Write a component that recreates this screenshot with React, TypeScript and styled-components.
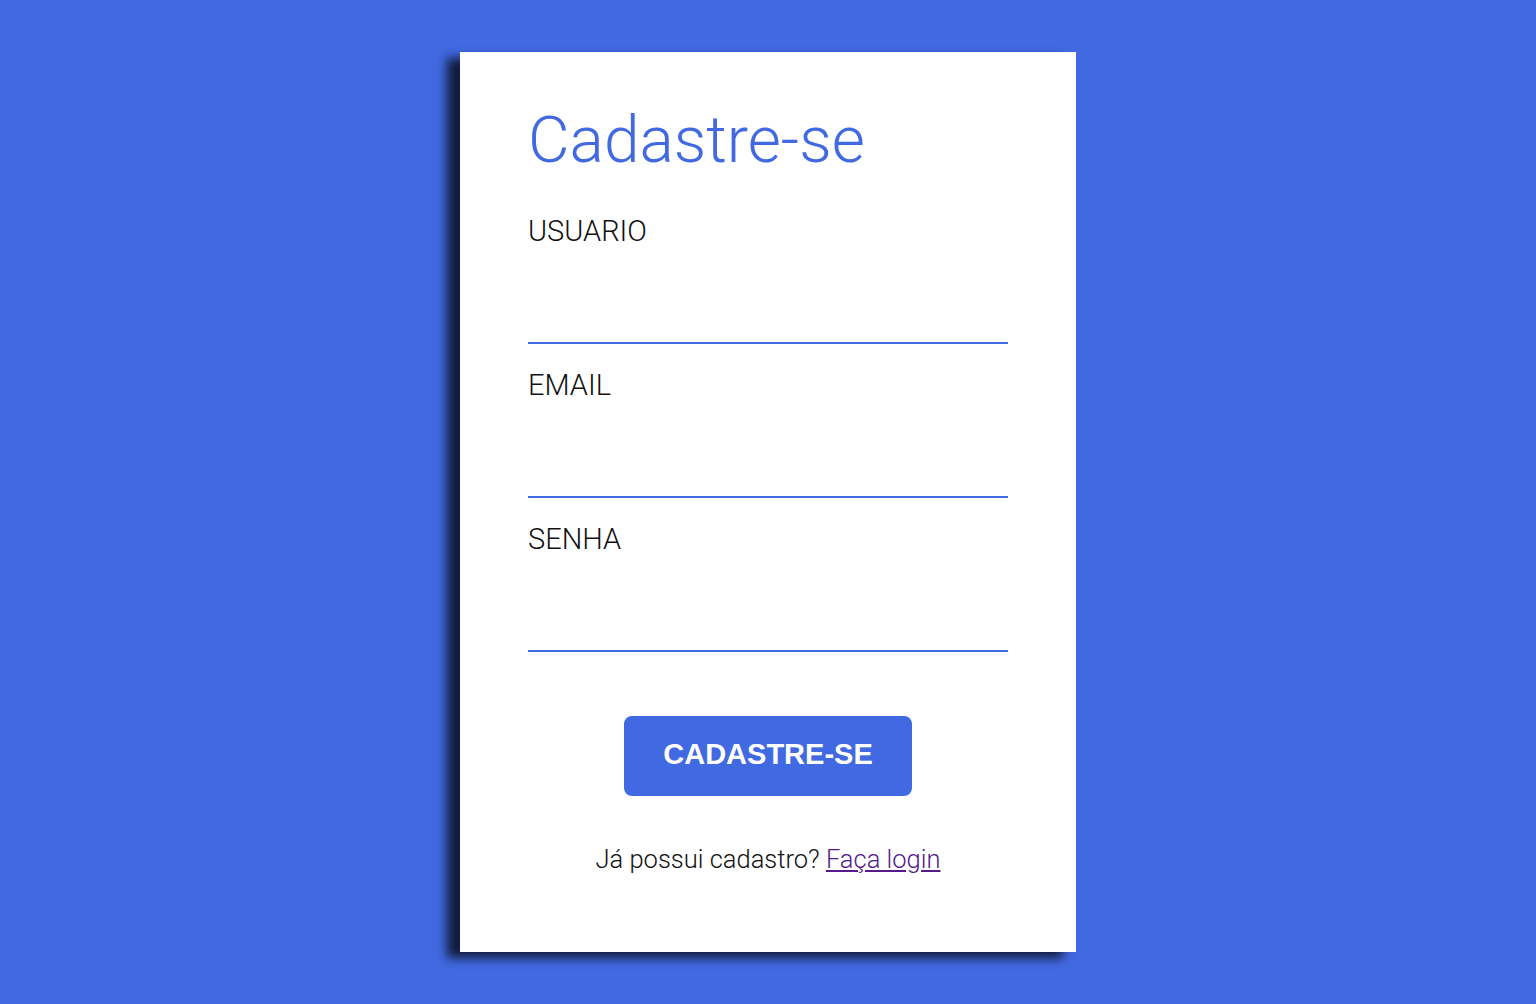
import { createGlobalStyle, styled } from "styled-components";

const GlobalStyle = createGlobalStyle`
  html, body {
    margin: 0;
    padding: 0;
    background: #4169e1;
    font-family: Roboto, "Noto Sans", sans-serif;
  }
`;

const Page = styled.div`
  min-height: 100vh;
  display: flex;
  align-items: center;
  justify-content: center;
`;

const Card = styled.form`
  width: 616px;
  height: 900px;
  box-sizing: border-box;
  padding: 57px 68px 0;
  background: #fff;
  box-shadow: -13px 6px 10px rgba(0, 0, 0, 0.75);
  display: flex;
  flex-direction: column;
`;

const Title = styled.h1`
  margin: 0 0 44px;
  font-size: 64px;
  line-height: 1;
  font-weight: 300;
  color: #4169e1;
`;

const Field = styled.div`
  display: flex;
  flex-direction: column;
  margin-bottom: 27px;
`;

const Label = styled.label`
  font-size: 29px;
  line-height: 28px;
  font-weight: 300;
  color: #111;
`;

const Input = styled.input`
  height: 99px;
  box-sizing: border-box;
  border: none;
  border-bottom: 2px solid #4169e1;
  outline: none;
  font-family: inherit;
  font-size: 24px;
  font-weight: 300;
  background: transparent;
`;

const Button = styled.button`
  align-self: center;
  margin-top: 37px;
  width: 288px;
  height: 80px;
  padding: 0 0 3px;
  border: none;
  border-radius: 8px;
  background: #4169e1;
  color: #fff;
  font-family: "Liberation Sans", Arial, sans-serif;
  font-weight: 700;
  font-size: 29px;
  cursor: pointer;
`;

const Footer = styled.p`
  margin: 48px 0 0;
  text-align: center;
  font-size: 25.5px;
  font-weight: 300;
  color: #111;
`;

const Link = styled.a`
  color: #551a8b;
`;

const fields = ["USUARIO", "EMAIL", "SENHA"];

export default function App() {
  return (
    <>
      <GlobalStyle />
      <Page>
        <Card onSubmit={(e) => e.preventDefault()}>
          <Title>Cadastre-se</Title>
          {fields.map((name) => (
            <Field key={name}>
              <Label>{name}</Label>
              <Input type={name === "SENHA" ? "password" : "text"} />
            </Field>
          ))}
          <Button type="submit">CADASTRE-SE</Button>
          <Footer>
            Já possui cadastro? <Link href="#">Faça login</Link>
          </Footer>
        </Card>
      </Page>
    </>
  );
}
